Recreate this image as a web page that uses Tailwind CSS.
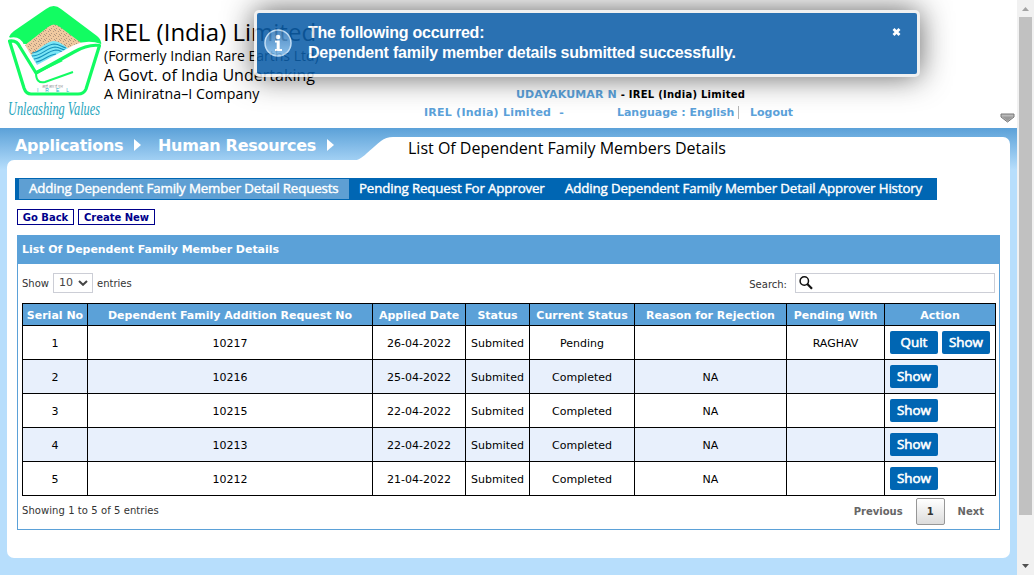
<!DOCTYPE html>
<html lang="en">
<head>
<meta charset="utf-8">
<title>List Of Dependent Family Members Details</title>
<script src="https://cdn.jsdelivr.net/npm/@tailwindcss/browser@4"></script>
</head>
<body class="flex h-[575px] w-[1034px] overflow-hidden bg-white font-['DejaVu_Sans',sans-serif] text-[11px] leading-[14px] text-black">
<div class="relative flex w-[1017px] flex-col">
  <header class="flex h-[128px] shrink-0">
    <svg class="h-[128px] w-[104px] shrink-0 overflow-visible" viewBox="0 0 104 128">
      <defs>
        <pattern id="sand" width="5" height="5" patternUnits="userSpaceOnUse">
          <rect width="5" height="5" fill="#f0c9a0"/>
          <path d="M0 .5h1M3 1.5h1M1 3.5h1M4 4.5h1" stroke="#b0947c"/>
        </pattern>
      </defs>
      <path d="M9 37Q10 34 14 31L46 9Q54 3 61 9L97 36Q102 40 101 45L88 44L20 44Z" fill="#12fc62"/>
      <path d="M25 45L48 27Q54 22 60 27L84 45L38 67Z" fill="url(#sand)"/>
      <path d="M31 55C38 51 44 43 53 41C59 41 64 45 70 50L38 68Z" fill="#7be6f6"/>
      <path d="M32 53c9-1 13-8 22-9 5 0 8 3 12 4M32 56c10 0 14-8 23-9 5 0 7 3 10 3M34 59c9-1 13-8 22-9 4 0 5 2 7 2M36 62c7-1 12-7 20-8" fill="none" stroke="#1590bb" stroke-width="1.100"/>
      <path d="M9 38Q20 35 24 45L37 65L74 45Q88 39 101 44L87 92H26Z" fill="#fff"/>
      <path d="M9.500 41Q17 40 20 47L36 73L74 52Q88 44 99.500 45.500L86 89Q84 94 78 94H31Q26 94 24 88Z" fill="none" stroke="#12fc62" stroke-width="3.200" stroke-linejoin="round"/>
      <path d="M36 73Q36 84 45 82L73 72" fill="none" stroke="#12fc62" stroke-width="2"/>
      <path d="M37 72L62 60" fill="none" stroke="#12fc62" stroke-width="2.500"/>
      <text x="42" y="87.500" textLength="21" lengthAdjust="spacingAndGlyphs" font-family="Noto Sans" font-size="4" fill="#999">आई आर ई एल</text>
      <text x="37" y="92" textLength="32" font-family="Liberation Sans" font-size="5" fill="#28b3c6">IREL</text>
      <text x="8" y="114.500" textLength="92" lengthAdjust="spacingAndGlyphs" font-family="Liberation Serif" font-style="italic" font-size="18" fill="#1fa5bd">Unleashing Values</text>
    </svg>
    <div class="w-[320px] shrink-0 whitespace-nowrap pt-[17px] font-['Open_Sans',sans-serif]">
      <div class="-ml-px h-[29px] text-[24px] leading-[29px]">IREL (India) Limited</div>
      <div class="h-[20px] text-[14px] leading-[20px]">(Formerly Indian Rare Earths Ltd)</div>
      <div class="h-[19px] text-[16px] leading-[19px] tracking-[.03px]">A Govt. of India Undertaking</div>
      <div class="h-[18px] text-[14.2px] leading-[18px] tracking-[.05px]">A Miniratna–I Company</div>
    </div>
    <div class="flex flex-1 flex-col pt-[87px] font-bold text-[#5ba1d9]">
      <div class="ml-[92px] h-[17px] whitespace-nowrap pt-px"><span class="tracking-[.15px]">UDAYAKUMAR N</span><span class="text-[10px] tracking-[.25px] text-black"> - IREL (India) Limited</span></div>
      <div class="flex h-[16px] items-center whitespace-nowrap">
        <span class="w-[193px] whitespace-pre pt-px tracking-[.24px]">IREL (India) Limited  -</span>
        <span class="w-[122px] border-r border-[#b5b5b5] leading-[13px] tracking-[-.03px]">Language : English</span>
        <span class="ml-[11px] pt-px">Logout</span>
        <svg class="ml-auto mr-[2px] mt-[12px] h-[11px] w-[15px]" viewBox="0 0 15 11"><path d="M1 1H14V4L7.500 9L1 4Z" fill="#bbb" stroke="#777"/><path d="M2 3.500H13L7.500 8Z" fill="#999"/></svg>
      </div>
    </div>
  </header>

  <main class="flex flex-1 flex-col bg-[#b7defc] bg-[linear-gradient(#5ba1d8_0px,#b7defc_42px)] px-[7px] pb-[17px]">
    <nav class="flex h-[32px] shrink-0 text-[16px] font-bold text-white">
      <div class="flex w-[350px] whitespace-nowrap pl-[8px] pt-[8px] leading-[20px] tracking-[-.27px]">
        <span class="w-[119px]">Applications</span>
        <svg class="mr-[17px] mt-[3px] h-[12px] w-[7px]" viewBox="0 0 7 12"><path d="M0 0L7 6L0 12Z" fill="#fff"/></svg>
        <span class="w-[169px]">Human Resources</span>
        <svg class="mt-[3px] h-[12px] w-[7px]" viewBox="0 0 7 12"><path d="M0 0L7 6L0 12Z" fill="#fff"/></svg>
      </div>
      <svg class="mt-[9px] h-[23px] w-[36px]" viewBox="0 0 36 23"><path d="M0 23C6 21 8 17 24 4Q29 0 36 0V23Z" fill="#fff"/></svg>
      <h1 class="mt-[9px] flex-1 whitespace-nowrap rounded-tr-[7px] bg-white pl-[15px] font-['Open_Sans',sans-serif] text-[16px] font-normal leading-[23px] text-black">List Of Dependent Family Members Details</h1>
    </nav>
    <section class="flex-1 rounded-b-[7px] rounded-tl-[7px] bg-white pl-[8px] pt-[18px]">
      <div class="flex h-[22px] w-[922px] whitespace-nowrap bg-[#0066b3] py-px pl-[4px] font-['Open_Sans',sans-serif] text-[13.3px] leading-[19px] tracking-[-.13px] text-white [-webkit-text-stroke:.4px_white]">
        <span class="w-[330px] bg-[#5e9fd3] pl-[10px]">Adding Dependent Family Member Detail Requests</span>
        <span class="w-[206px] pl-[10px]">Pending Request For Approver</span>
        <span class="pl-[10px]">Adding Dependent Family Member Detail Approver History</span>
      </div>
      <div class="ml-[2px] mt-[9px] flex h-[16px] gap-[4px] text-center text-[10px] font-bold leading-[15px] text-[#00008b]">
        <span class="w-[57px] border border-[#00008b]">Go Back</span>
        <span class="w-[77px] border border-[#00008b]">Create New</span>
      </div>
      <div class="ml-[2px] mt-[10px] h-[295px] w-[983px] border border-[#5ba1d8]">
        <h2 class="h-[28px] bg-[#5ba1d8] pl-[4px] text-[11px] font-bold leading-[28px] tracking-[-.04px] text-white">List Of Dependent Family Member Details</h2>
        <div class="flex h-[39px] items-start pl-[4px] pr-[4px] pt-[9px] text-[10px] text-[#333]">
          <span class="w-[31px] pt-[4px]">Show</span>
          <span class="flex h-[20px] w-[40px] items-center border border-[#ccced6] pl-[5px] text-[11px] text-[#444]">10
            <svg class="ml-[5px] h-[6px] w-[10px]" viewBox="0 0 10 6"><path d="M1 1L5 4.800L9 1" fill="none" stroke="#444" stroke-width="2"/></svg></span>
          <span class="pl-[4px] pt-[4px]">entries</span>
          <span class="ml-auto pr-[8px] pt-[5px]">Search:</span>
          <span class="h-[20px] w-[200px] border border-[#ccced6]"><svg class="ml-[3px] mt-[2px] h-[14px] w-[14px]" viewBox="0 0 14 14"><circle cx="5.300" cy="5" r="4.200" fill="none" stroke="#111" stroke-width="1.500"/><path d="M8.300 8L13 12.800" stroke="#111" stroke-width="2.200"/></svg></span>
        </div>
        <table class="ml-[4px] w-[974px] table-fixed border-collapse text-center text-[11px]">
          <colgroup><col class="w-[65px]"><col class="w-[285px]"><col class="w-[93px]"><col class="w-[64px]"><col class="w-[105px]"><col class="w-[152px]"><col class="w-[98px]"><col class="w-[111px]"></colgroup>
          <thead><tr class="h-[22px] whitespace-nowrap bg-[#5ba1d8] text-white [&>th]:border [&>th]:border-black [&>th]:p-0 [&>th]:pt-[2px]">
            <th>Serial No</th><th>Dependent Family Addition Request No</th><th>Applied Date</th><th>Status</th><th>Current Status</th><th>Reason for Rejection</th><th>Pending With</th><th>Action</th></tr></thead>
          <tbody class="[&_td]:border [&_td]:border-black [&_td]:p-0 [&_td:not(:last-child)]:pt-[2px]">
            <tr class="h-[34px]"><td>1</td><td>10217</td><td>26-04-2022</td><td>Submited</td><td>Pending</td><td></td><td>RAGHAV</td>
              <td><div class="flex gap-[4px] pl-[5px] font-['Open_Sans',sans-serif] text-[13.4px] leading-[23px] text-white [-webkit-text-stroke:.6px_white]"><span class="w-[48px] rounded-[2px] bg-[#0066b3]">Quit</span><span class="w-[48px] rounded-[2px] bg-[#0066b3]">Show</span></div></td></tr>
            <tr class="h-[34px] bg-[#e8f0fc]"><td>2</td><td>10216</td><td>25-04-2022</td><td>Submited</td><td>Completed</td><td>NA</td><td></td>
              <td><div class="flex pl-[5px] font-['Open_Sans',sans-serif] text-[13.4px] leading-[23px] text-white [-webkit-text-stroke:.6px_white]"><span class="w-[48px] rounded-[2px] bg-[#0066b3]">Show</span></div></td></tr>
            <tr class="h-[34px]"><td>3</td><td>10215</td><td>22-04-2022</td><td>Submited</td><td>Completed</td><td>NA</td><td></td>
              <td><div class="flex pl-[5px] font-['Open_Sans',sans-serif] text-[13.4px] leading-[23px] text-white [-webkit-text-stroke:.6px_white]"><span class="w-[48px] rounded-[2px] bg-[#0066b3]">Show</span></div></td></tr>
            <tr class="h-[34px] bg-[#e8f0fc]"><td>4</td><td>10213</td><td>22-04-2022</td><td>Submited</td><td>Completed</td><td>NA</td><td></td>
              <td><div class="flex pl-[5px] font-['Open_Sans',sans-serif] text-[13.4px] leading-[23px] text-white [-webkit-text-stroke:.6px_white]"><span class="w-[48px] rounded-[2px] bg-[#0066b3]">Show</span></div></td></tr>
            <tr class="h-[34px]"><td>5</td><td>10212</td><td>21-04-2022</td><td>Submited</td><td>Completed</td><td>NA</td><td></td>
              <td><div class="flex pl-[5px] font-['Open_Sans',sans-serif] text-[13.4px] leading-[23px] text-white [-webkit-text-stroke:.6px_white]"><span class="w-[48px] rounded-[2px] bg-[#0066b3]">Show</span></div></td></tr>
          </tbody>
        </table>
        <div class="flex h-[31px] items-center pl-[4px] pr-[15px] text-[10px] text-[#333]">
          <span class="pb-[2px] tracking-[.07px]">Showing 1 to 5 of 5 entries</span>
          <span class="ml-auto font-bold text-[#666]">Previous</span>
          <span class="ml-[13px] h-[27px] w-[29px] rounded-[2px] border border-[#979797] bg-linear-to-b from-white to-[#dcdcdc] text-center font-bold leading-[26px]">1</span>
          <span class="ml-[13px] font-bold text-[#666]">Next</span>
        </div>
      </div>
    </section>
  </main>

  <div class="absolute left-[254px] top-[10px] flex h-[67px] w-[666px] rounded-[5px] border-[3px] border-[#eee] bg-[#0d5ea8] font-['Liberation_Sans',sans-serif] text-[16px] font-bold leading-[20px] text-white opacity-[.88] shadow-[0_0_30px_rgba(0,0,0,.7)]">
    <svg class="ml-[7px] mt-[15px] h-[30px] w-[28px] shrink-0" viewBox="0 0 28 30">
      <defs><linearGradient id="info" x2="0" y2="1"><stop stop-color="#3679b9"/><stop offset="1" stop-color="#7cb9ea"/></linearGradient></defs>
      <circle cx="14" cy="15" r="13" fill="url(#info)" stroke="#b9d9f4" stroke-width="1.500"/>
      <circle cx="14" cy="9" r="2.300" fill="#fff"/><path d="M11 12.500h4.700v8.500H18v2h-7v-2h1.700v-6.500H11Z" fill="#fff"/>
    </svg>
    <div class="whitespace-nowrap pl-[16px] pt-[10px] tracking-[-.22px]"><div>The following occurred:</div><div>Dependent family member details submitted successfully.</div></div>
    <svg class="ml-auto mr-[16px] mt-[15px] h-[8px] w-[9px]" viewBox="0 0 9 8"><path d="M1.500 1L7.500 7M7.500 1L1.500 7" stroke="#fff" stroke-width="2.800"/></svg>
  </div>
</div>
<aside class="flex w-[17px] flex-col items-center bg-[#f1f1f1]">
  <svg class="h-[17px] w-[17px]" viewBox="0 0 17 17"><path d="M5 11L8.500 7L12 11Z" fill="#a3a3a3"/></svg>
  <div class="h-[498px] w-[13px] bg-[#c1c1c1]"></div>
  <svg class="mt-auto h-[17px] w-[17px]" viewBox="0 0 17 17"><path d="M5 6L8.500 10L12 6Z" fill="#505050"/></svg>
</aside>
</body>
</html>
